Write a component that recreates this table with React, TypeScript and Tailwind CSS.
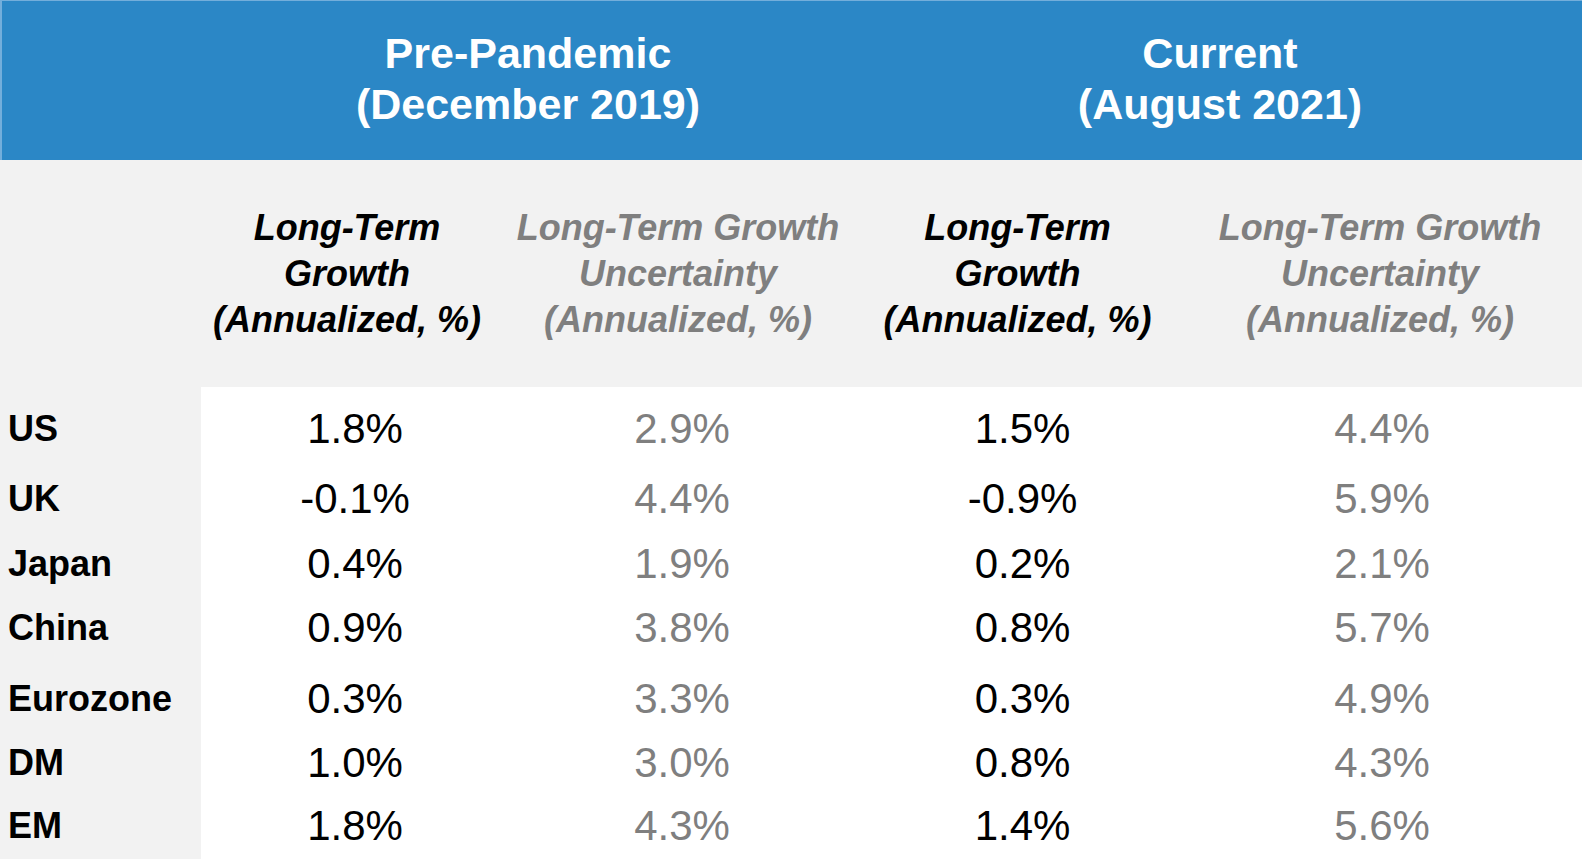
import React from "react";

const rows: { label: string; v: string[]; h: string }[] = [
  { label: "US", v: ["1.8%", "2.9%", "1.5%", "4.4%"], h: "h-[77px] pt-[7px]" },
  { label: "UK", v: ["-0.1%", "4.4%", "-0.9%", "5.9%"], h: "h-[70px]" },
  { label: "Japan", v: ["0.4%", "1.9%", "0.2%", "2.1%"], h: "h-[60px]" },
  { label: "China", v: ["0.9%", "3.8%", "0.8%", "5.7%"], h: "h-[68px]" },
  { label: "Eurozone", v: ["0.3%", "3.3%", "0.3%", "4.9%"], h: "h-[74px]" },
  { label: "DM", v: ["1.0%", "3.0%", "0.8%", "4.3%"], h: "h-[54px]" },
  { label: "EM", v: ["1.8%", "4.3%", "1.4%", "5.6%"], h: "h-[69px] pt-[3px]" },
];

const cols = "grid grid-cols-[201px_304px_350px_325px_402px]";

export default function App() {
  return (
    <div
      className="w-[1588px] h-[862px] bg-white overflow-hidden"
      style={{ fontFamily: '"Liberation Sans", Arial, Helvetica, sans-serif' }}
    >
      <div className="w-[1582px]">
        {/* Blue header band */}
        <div className="h-[160px] bg-[#2b87c6] border-t border-l-2 border-[#73aedb] grid grid-cols-[199px_654px_727px] text-white font-bold text-[43px] leading-[51px]">
          <div />
          <div className="flex items-center justify-center text-center pb-[3px]">
            <div>
              Pre-Pandemic
              <br />
              (December 2019)
            </div>
          </div>
          <div className="flex items-center justify-center text-center pb-[3px] pl-[3px]">
            <div>
              Current
              <br />
              (August 2021)
            </div>
          </div>
        </div>

        {/* Sub header */}
        <div className={`${cols} h-[227px] bg-[#f2f2f2] font-bold italic text-[36px] leading-[46px]`}>
          <div />
          <div className="flex items-center justify-center text-center text-black pr-[12px]">
            <div>
              Long-Term
              <br />
              Growth
              <br />
              (Annualized, %)
            </div>
          </div>
          <div className="flex items-center justify-center text-center text-[#7f7f7f] whitespace-nowrap pr-[4px]">
            <div>
              Long-Term Growth
              <br />
              Uncertainty
              <br />
              (Annualized, %)
            </div>
          </div>
          <div className="flex items-center justify-center text-center text-black">
            <div>
              Long-Term
              <br />
              Growth
              <br />
              (Annualized, %)
            </div>
          </div>
          <div className="flex items-center justify-center text-center text-[#7f7f7f] whitespace-nowrap pr-[2px]">
            <div>
              Long-Term Growth
              <br />
              Uncertainty
              <br />
              (Annualized, %)
            </div>
          </div>
        </div>

        {/* Body rows */}
        <div>
          {rows.map((r) => (
            <div key={r.label} className={`${cols}`}>
              <div className={`${r.h} bg-[#f2f2f2] flex items-center pl-[8px] font-bold text-[36px] leading-none text-black`}>
                {r.label}
              </div>
              <div className={`${r.h} flex items-center justify-center text-[42px] leading-none text-black pl-[4px]`}>
                {r.v[0]}
              </div>
              <div className={`${r.h} flex items-center justify-center text-[42px] leading-none text-[#7f7f7f] pl-[4px]`}>
                {r.v[1]}
              </div>
              <div className={`${r.h} flex items-center justify-center text-[42px] leading-none text-black pl-[10px]`}>
                {r.v[2]}
              </div>
              <div className={`${r.h} flex items-center justify-center text-[42px] leading-none text-[#7f7f7f] pl-[2px]`}>
                {r.v[3]}
              </div>
            </div>
          ))}
        </div>
      </div>
    </div>
  );
}
